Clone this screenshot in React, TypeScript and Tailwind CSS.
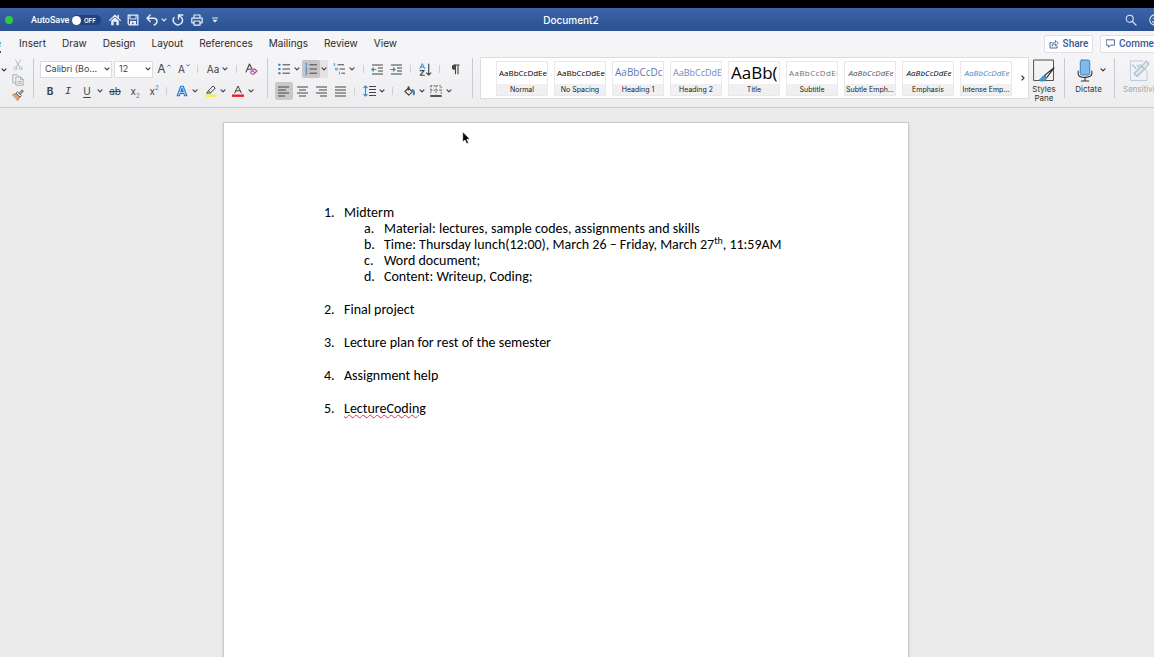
import type { ReactNode } from "react";

const Svg = ({ w, h, children, className = "" }: { w: number; h: number; children: ReactNode; className?: string }) => (
  <svg
    width={w}
    height={h}
    viewBox={`0 0 ${w} ${h}`}
    fill="none"
    stroke="currentColor"
    strokeLinecap="round"
    strokeLinejoin="round"
    className={`shrink-0 ${className}`}
    aria-hidden="true"
  >
    {children}
  </svg>
);

const Caret = () => (
  <Svg w={6} h={4}>
    <path d="M1 0.9 L3 2.9 L5 0.9" strokeWidth="1.2" />
  </Svg>
);

const Tool = ({ label, className, children }: { label: string; className: string; children: ReactNode }) => (
  <button type="button" aria-label={label} className={`flex h-[18px] shrink-0 items-center justify-center ${className}`}>
    {children}
  </button>
);

const Drop = ({ label }: { label: string }) => (
  <Tool label={label} className="w-2">
    <Caret />
  </Tool>
);

const Sep = ({ className = "" }: { className?: string }) => <div className={`h-2 w-px shrink-0 bg-[#cfcfd1] ${className}`} />;
const Divider = () => <div className="my-px w-px shrink-0 bg-[#cbcbcd]" />;

const Lines = ({ rows }: { rows: number[][] }) => (
  <Svg w={12} h={11}>
    {rows.map(([a, b], i) => (
      <path key={i} d={`M${a - 1} ${i * 3 + 1} H${b - 1}`} strokeWidth="1" strokeLinecap="butt" />
    ))}
  </Svg>
);

const tabs = ["Insert", "Draw", "Design", "Layout", "References", "Mailings", "Review", "View"];

const styles = [
  { name: "Normal", sample: "AaBbCcDdEe", look: "text-[8px] text-black justify-center" },
  { name: "No Spacing", sample: "AaBbCcDdEe", look: "text-[8px] text-black justify-center" },
  { name: "Heading 1", sample: "AaBbCcDc", look: "text-[10px] text-[#5f7bb0] justify-start" },
  { name: "Heading 2", sample: "AaBbCcDdEe", look: "text-[9px] text-[#7189b8] justify-start" },
  { name: "Title", sample: "AaBb(", look: "text-[17px] text-black justify-start" },
  { name: "Subtitle", sample: "AaBbCcDdEe", look: "text-[8px] tracking-wider text-[#707070] justify-start" },
  { name: "Subtle Emph...", sample: "AaBbCcDdEe", look: "text-[8px] italic text-[#505050] justify-center" },
  { name: "Emphasis", sample: "AaBbCcDdEe", look: "text-[8px] italic text-black justify-center" },
  { name: "Intense Emp...", sample: "AaBbCcDdEe", look: "text-[8px] italic text-[#4f7fcb] justify-center" },
];

function TitleBar() {
  return (
    <header className="relative flex h-[23px] items-center bg-linear-to-b from-[#3b65a8] to-[#2a5090] pt-px text-white">
      <span className="ml-[5px] size-2 rounded-full bg-[#2fca44]" />
      <label htmlFor="autosave" className="ml-[18px] w-[38px] pt-px font-[Roboto,sans-serif] text-[9px] font-medium">AutoSave</label>
      <span className="relative ml-[3px] flex h-[10px] w-[29px] items-center rounded-full bg-[#23417a]">
        <input id="autosave" type="checkbox" className="peer absolute inset-0 appearance-none" />
        <span className="size-[9px] rounded-full bg-white" />
        <span className="ml-[3px] text-[6px] font-semibold">OFF</span>
      </span>
      <div className="ml-2 flex items-center text-[#e6edf8]">
        <Tool label="Home" className="w-3">
          <Svg w={12} h={12}>
            <path d="M0.7 6.4 L6 1.3 L11.3 6.4 M9.3 1.2 V4" strokeWidth="1.3" />
            <path d="M2.2 6.8 L6 3.2 L9.8 6.8 V11.3 H7.4 V7.8 H4.6 V11.3 H2.2 Z" fill="currentColor" stroke="none" />
          </Svg>
        </Tool>
        <Tool label="Save" className="ml-[6px] w-3">
          <Svg w={12} h={12}>
            <path d="M1.2 1.2 H10.8 V10.8 H2.2 L1.2 9.8 Z" strokeWidth="1.3" />
            <path d="M3 1.5 V5 H9 V1.5" strokeWidth="1" />
            <path d="M3 11 V7 H9 V11 H6.5 V8.5 H5 V11 Z" fill="currentColor" stroke="none" />
          </Svg>
        </Tool>
        <Tool label="Undo" className="ml-[7px] w-3">
          <Svg w={12} h={12}>
            <path d="M4.2 1 L1 4.2 L4.2 7.4 M1.2 4.2 H7.5 C12 4.2 12.2 9 8.2 11" strokeWidth="1.4" />
          </Svg>
        </Tool>
        <span className="ml-[2px] flex"><Drop label="Undo history" /></span>
        <Tool label="Redo" className="ml-1 w-3">
          <Svg w={12} h={12}>
            <path d="M2 3.6 A4.6 4.6 0 1 0 9.8 3.8 L6.6 1.2 M6.5 5 V1 H10.8" strokeWidth="1.4" />
          </Svg>
        </Tool>
        <Tool label="Print" className="ml-[7px] w-3">
          <Svg w={12} h={12}>
            <path d="M3 4 V1 H9 V4 M3 8.8 H0.8 V4.2 H11.2 V8.8 H9" strokeWidth="1.2" />
            <path d="M3 7 H9 V11.2 H3 Z" strokeWidth="1.2" />
          </Svg>
        </Tool>
        <Tool label="Customize toolbar" className="ml-[8px] w-2">
          <Svg w={6} h={6}>
            <path d="M0.5 1 H5.5" strokeWidth="1" />
            <path d="M0.3 2.8 H5.7 L3 5.6 Z" fill="currentColor" stroke="none" />
          </Svg>
        </Tool>
      </div>
      <h1 className="pointer-events-none absolute inset-x-0 pr-3 pt-px text-center text-[10px] font-medium">Document2</h1>
      <div className="-mr-[7px] ml-auto flex items-center gap-3 text-[#dde7f6]">
        <Tool label="Search" className="w-3">
          <Svg w={12} h={12}>
            <circle cx="4.7" cy="4.7" r="3.5" strokeWidth="1.1" />
            <path d="M7.3 7.3 L11 11" strokeWidth="1.2" />
          </Svg>
        </Tool>
        <Tool label="Feedback" className="w-3">
          <Svg w={12} h={12}>
            <circle cx="6" cy="6" r="5.2" strokeWidth="1.1" />
            <path d="M3.5 7.2 C4.5 9.4 7.5 9.4 8.5 7.2 M4.2 4.2 V4.6 M7.8 4.2 V4.6" strokeWidth="1.1" />
          </Svg>
        </Tool>
      </div>
    </header>
  );
}

function TabRow() {
  return (
    <nav className="flex h-[25px] items-center bg-[#f5f4f6] text-[10px] text-[#2b2b2b]">
      <div className="-ml-[27px] flex shrink-0 gap-4">
        <button type="button" className="mr-[2px] border-b-2 border-[#2a5699] pt-px text-[#2a5699]">Home</button>
        {tabs.map((t) => (
          <button key={t} type="button" className="border-b-2 border-transparent pt-px">{t}</button>
        ))}
      </div>
      <div className="-mr-4 ml-auto flex shrink-0 gap-[7px] text-[10px] font-medium text-[#3b5998]">
        <button type="button" className="flex h-[18px] w-[49px] items-center justify-center gap-1 rounded-xs border border-[#e0e0e2] bg-white font-[Roboto,sans-serif]">
          <Svg w={10} h={10}>
            <path d="M3 3.7 H1 V9 H8 V7" strokeWidth="0.9" />
            <path d="M3.2 6.8 C3.2 4.5 4.5 3.4 6.5 3.4 V1.4 L9.3 4.2 L6.5 6.8 V5 C5 5 4 5.5 3.2 6.8 Z" strokeWidth="0.8" />
          </Svg>
          Share
        </button>
        <button type="button" className="flex h-[18px] w-[70px] items-center gap-1 rounded-xs border border-[#e0e0e2] bg-white pl-[5px] font-[Roboto,sans-serif]">
          <Svg w={9} h={9}>
            <path d="M0.6 0.8 H8.4 V6.2 H4.6 L2.6 8.2 V6.2 H0.6 Z" strokeWidth="0.9" />
          </Svg>
          Comments
        </button>
      </div>
    </nav>
  );
}

function Clipboard() {
  return (
    <div className="flex w-[33px] shrink-0">
      <div className="flex pt-1"><Drop label="Paste options" /></div>
      <div className="ml-1 flex flex-col items-center gap-[3px] pt-[2px]">
        <button type="button" aria-label="Cut" className="text-[#b3b3b5]">
          <Svg w={12} h={12}>
            <path d="M3.5 1 L7.7 8 M8.5 1 L4.3 8" strokeWidth="0.9" />
            <circle cx="3.3" cy="9.4" r="1.5" strokeWidth="0.9" stroke="#9fc4e0" />
            <circle cx="8.7" cy="9.4" r="1.5" strokeWidth="0.9" stroke="#9fc4e0" />
          </Svg>
        </button>
        <button type="button" aria-label="Copy" className="text-[#a9a9ab]">
          <Svg w={12} h={12}>
            <path d="M4 9 H0.8 V0.8 H5 L6.5 2.2" strokeWidth="0.9" />
            <path d="M4.2 3 H8.8 L11.2 5.3 V11.2 H4.2 Z M8.5 3.2 V5.6 H11 M6 7.5 H9.5 M6 9.3 H9.5" strokeWidth="0.9" />
          </Svg>
        </button>
        <button type="button" aria-label="Format Painter" className="text-[#444]">
          <Svg w={12} h={12}>
            <path d="M1 5.6 L4.5 4.4 L8 7.9 L5.8 11.2 Z" fill="#f0a25f" stroke="#a56a3c" strokeWidth="0.7" />
            <path d="M4.2 4 L5.5 2.8 L9.4 6.6 L8.2 8 Z" fill="#fff" strokeWidth="0.9" />
            <path d="M7.3 4.2 L10.2 1 L11.3 2 L8.4 5.2" strokeWidth="1" />
          </Svg>
        </button>
      </div>
    </div>
  );
}

function FontGroup() {
  return (
    <div className="flex w-[233px] shrink-0 flex-col gap-1 pl-[6px] pt-[3px] text-[#444]">
      <div className="flex h-[18px] items-center">
        <div className="relative mr-[2px] flex items-center">
          <select aria-label="Font" className="h-[17px] w-[72px] appearance-none border border-[#dcdcde] bg-white pl-[4px] text-[9px]">
            <option>Calibri (Bo...</option>
          </select>
          <span className="pointer-events-none absolute right-[2px]"><Caret /></span>
        </div>
        <div className="relative flex items-center">
          <select aria-label="Font size" className="h-[17px] w-[39px] appearance-none border border-[#dcdcde] bg-white pl-[4px] text-[9px]">
            <option>12</option>
          </select>
          <span className="pointer-events-none absolute right-[2px]"><Caret /></span>
        </div>
        <Tool label="Grow font" className="ml-px w-5 gap-px text-[12px]">
          A<span className="mb-[7px] flex text-[#2e8bd0]"><Svg w={4} h={3}><path d="M0.7 2.3 L2 0.9 L3.3 2.3" strokeWidth="1" /></Svg></span>
        </Tool>
        <Tool label="Shrink font" className="w-5 gap-px text-[10px]">
          A<span className="mb-2 flex text-[#2e8bd0]"><Svg w={4} h={3}><path d="M0.7 0.7 L2 2.1 L3.3 0.7" strokeWidth="1" /></Svg></span>
        </Tool>
        <Sep className="ml-[3px]" />
        <Tool label="Change case" className="ml-[7px] w-4 text-[10px]">Aa</Tool>
        <Drop label="Case options" />
        <Sep className="ml-[7px]" />
        <Tool label="Clear formatting" className="ml-[7px] w-[14px]">
          <Svg w={13} h={12}>
            <path d="M1 9 L4.5 1 L7 6 M2.3 6.2 H6" strokeWidth="1.1" />
            <path d="M5.5 9.2 L9.2 5.8 L12 8 L8.5 11.3 H7 Z M7.3 7.5 L10 9.8" strokeWidth="1.1" stroke="#b04f9c" />
          </Svg>
        </Tool>
      </div>
      <div className="flex h-[18px] items-center text-[10px]">
        <Tool label="Bold" className="w-5 font-bold">B</Tool>
        <Tool label="Italic" className="w-4 font-[Liberation_Mono,monospace] text-[11px] italic">I</Tool>
        <Tool label="Underline" className="ml-[2px] w-[18px] underline underline-offset-2">U</Tool>
        <Drop label="Underline options" />
        <Tool label="Strikethrough" className="w-[22px] line-through">ab</Tool>
        <Tool label="Subscript" className="w-[18px]">
          x<span className="mt-2 text-[6px] text-[#2e8bd0]">2</span>
        </Tool>
        <Tool label="Superscript" className="w-5">
          x<span className="mb-2 text-[6px] text-[#2e8bd0]">2</span>
        </Tool>
        <Sep className="ml-[2px]" />
        <Tool label="Text effects" className="ml-[7px] w-4">
          <Svg w={12} h={12}>
            <path d="M1.2 10.8 L4.7 1.2 H7.3 L10.8 10.8 H8.6 L7.8 8.4 H4.2 L3.4 10.8 Z M4.9 6.4 H7.1 L6 3.2 Z" strokeWidth="1.1" stroke="#2478c8" fill="#cfe5f8" />
          </Svg>
        </Tool>
        <span className="ml-px flex"><Drop label="Text effect options" /></span>
        <Tool label="Highlight" className="ml-1 w-4">
          <Svg w={12} h={12}>
            <path d="M3 6.2 L8 1 L10.3 3 L5.5 8 L2.2 8.2 Z M3.5 6 L5.5 7.8" strokeWidth="1" />
            <path d="M0.5 10.7 H11.5" strokeWidth="2.4" stroke="#f7f33a" strokeLinecap="butt" />
          </Svg>
        </Tool>
        <Drop label="Highlight colors" />
        <Tool label="Font color" className="ml-[3px] w-4">
          <Svg w={12} h={12}>
            <path d="M2.7 8 L6 1 L9.3 8 M3.8 5.8 H8.2" strokeWidth="1" />
            <path d="M0 10.7 H12" strokeWidth="2.4" stroke="#f21b2a" strokeLinecap="butt" />
          </Svg>
        </Tool>
        <span className="ml-px flex"><Drop label="Font colors" /></span>
      </div>
    </div>
  );
}

function ParagraphGroup() {
  return (
    <div className="flex w-[204px] shrink-0 flex-col gap-1 pl-[7px] pt-[3px] text-[#444]">
      <div className="flex h-[18px] items-center">
        <Tool label="Bullets" className="w-[18px]">
          <Svg w={12} h={12}>
            <path d="M4.5 1.8 H12 M4.5 6 H12 M4.5 10.2 H12" strokeWidth="1" strokeLinecap="butt" />
            <path d="M0.3 1.8 H2.5 M0.3 6 H2.5 M0.3 10.2 H2.5" stroke="#2e7fc0" strokeWidth="2" strokeLinecap="butt" />
          </Svg>
        </Tool>
        <Drop label="Bullet options" />
        <div className="ml-px flex rounded-xs bg-[#e3e3e4]">
          <Tool label="Numbering" className="w-[18px] rounded-xs bg-[#c6c6c8]">
            <Svg w={12} h={12}>
              <path d="M4.5 1.8 H12 M4.5 6 H12 M4.5 10.2 H12" strokeWidth="1" strokeLinecap="butt" />
              <path d="M0.8 0.6 L1.6 0.3 V3 M0.6 4.8 H2 L0.7 7.2 H2.2 M0.6 8.8 H2 L1.3 10 L2.1 10.8 L0.6 11.5" stroke="#2e7fc0" strokeWidth="0.8" />
            </Svg>
          </Tool>
          <Drop label="Numbering options" />
        </div>
        <Tool label="Multilevel list" className="ml-[2px] w-[18px]">
          <Svg w={12} h={12}>
            <path d="M4.5 1.8 H11 M6.5 6 H12 M8.5 10.2 H12" strokeWidth="1" strokeLinecap="butt" />
            <path d="M0.8 0.9 L1.6 0.5 V3 M3 5.2 H4.4 V7 H3 Z M6.5 9 V11.2" stroke="#2e8bd0" strokeWidth="0.8" />
          </Svg>
        </Tool>
        <Drop label="Multilevel options" />
        <Sep className="ml-[7px]" />
        <Tool label="Decrease indent" className="ml-1 w-[18px]">
          <Svg w={12} h={11}>
            <path d="M1 1 H12 M7 4 H12 M7 7 H12 M1 10 H12" strokeWidth="1" strokeLinecap="butt" />
            <path d="M5 5.5 H0.8 M2.5 3.8 L0.8 5.5 L2.5 7.2" stroke="#2e8bd0" strokeWidth="1.1" />
          </Svg>
        </Tool>
        <Tool label="Increase indent" className="ml-px w-[18px]">
          <Svg w={12} h={11}>
            <path d="M1 1 H12 M7 4 H12 M7 7 H12 M1 10 H12" strokeWidth="1" strokeLinecap="butt" />
            <path d="M0.8 5.5 H5 M3.3 3.8 L5 5.5 L3.3 7.2" stroke="#2e8bd0" strokeWidth="1.1" />
          </Svg>
        </Tool>
        <Sep className="ml-[5px]" />
        <Tool label="Sort" className="ml-1 w-5">
          <Svg w={13} h={13}>
            <path d="M1 5.5 L3.3 0.6 L5.6 5.5 M1.9 4 H4.7" stroke="#2e8bd0" strokeWidth="1" />
            <path d="M1.2 7.6 H5.2 L1.2 12.2 H5.4 M9.7 1 V12 M7.5 9.8 L9.7 12 L11.9 9.8" strokeWidth="1.1" />
          </Svg>
        </Tool>
        <Sep className="ml-1" />
        <Tool label="Show formatting marks" className="ml-[5px] w-5">
          <Svg w={9} h={11}>
            <path d="M4.5 10.2 V1 M7 10.2 V1 M3.8 1 H8.5" strokeWidth="1.1" strokeLinecap="butt" />
            <path d="M4.5 0.6 H3.5 A2.6 2.6 0 0 0 3.5 5.8 H4.5 Z" fill="currentColor" stroke="none" />
          </Svg>
        </Tool>
      </div>
      <div className="flex h-[18px] items-center">
        <Tool label="Align left" className="w-[18px] rounded-xs bg-[#c9c9cb]"><Lines rows={[[1, 12], [1, 9], [1, 12], [1, 8]]} /></Tool>
        <Tool label="Align center" className="ml-px w-[18px]"><Lines rows={[[1, 12], [3, 10], [1, 12], [3, 10]]} /></Tool>
        <Tool label="Align right" className="ml-px w-[18px]"><Lines rows={[[1, 12], [4, 12], [1, 12], [5, 12]]} /></Tool>
        <Tool label="Justify" className="ml-px w-[18px]"><Lines rows={[[1, 12], [1, 12], [1, 12], [1, 12]]} /></Tool>
        <Sep className="ml-1" />
        <Tool label="Line spacing" className="ml-[5px] w-[18px]">
          <Svg w={13} h={12}>
            <path d="M6 1.5 H13 M6 4.5 H13 M6 7.5 H13 M6 10.5 H13" strokeWidth="1" strokeLinecap="butt" />
            <path d="M2.5 1 V11 M0.8 2.7 L2.5 1 L4.2 2.7 M0.8 9.3 L2.5 11 L4.2 9.3" stroke="#2e8bd0" strokeWidth="1.1" />
          </Svg>
        </Tool>
        <Drop label="Spacing options" />
        <Sep className="ml-[6px]" />
        <Tool label="Shading" className="ml-[7px] w-[18px]">
          <Svg w={11} h={11}>
            <path d="M4.5 2 L8.3 5.8 L4.8 9.2 L1 5.5 L5.2 1.2 M4.2 0.6 V4" strokeWidth="1.1" />
            <path d="M8.6 4 C10.4 5.5 10.5 7 9.6 8.4" strokeWidth="1.8" stroke="#3c79ac" />
          </Svg>
        </Tool>
        <Drop label="Shading colors" />
        <Tool label="Borders" className="ml-px w-[18px]">
          <Svg w={12} h={12}>
            <path d="M0.8 0.8 H11.2 V9.5 M0.8 0.8 V9.5 M6 0.8 V9.5 M0.8 5.2 H11.2" strokeWidth="0.9" strokeDasharray="1.5 1.3" strokeLinecap="butt" />
            <path d="M0.3 11 H11.7" strokeWidth="1.5" stroke="#222" strokeLinecap="butt" />
          </Svg>
        </Tool>
        <Drop label="Border options" />
      </div>
    </div>
  );
}

function Gallery() {
  return (
    <div className="ml-[7px] flex w-[549px] shrink-0 items-center border border-[#dcdcde] bg-white pl-[15px]">
      <div className="flex gap-[6px]">
        {styles.map((s) => (
          <button key={s.name} type="button" className="flex h-[35px] w-[52px] flex-col overflow-hidden border border-[#e9e9eb] bg-white">
            <span className={`ml-[2px] flex h-[22px] w-[48px] items-center overflow-hidden whitespace-nowrap font-[Open_Sans,sans-serif] ${s.look}`}>{s.sample}</span>
            <span className="h-[11px] w-full whitespace-nowrap bg-[#f0f0f2] text-center text-[7px] leading-[11px] text-[#222]">{s.name}</span>
          </button>
        ))}
      </div>
      <button type="button" aria-label="More styles" className="ml-[6px] flex w-3 justify-center text-[#333]">
        <Svg w={4} h={6}><path d="M1 1 L3 3 L1 5" strokeWidth="1.1" /></Svg>
      </button>
    </div>
  );
}

function Ribbon() {
  return (
    <div className="flex h-[52px] overflow-hidden border-b border-[#cdcdcf] bg-linear-to-b from-[#f5f4f6] to-[#ededef] pb-2 pt-px text-[#333]">
      <Clipboard />
      <Divider />
      <FontGroup />
      <Divider />
      <ParagraphGroup />
      <Divider />
      <Gallery />
      <button type="button" className="ml-px flex w-[28px] shrink-0 flex-col items-center pt-[2px] text-[8px] leading-[9px]">
        <Svg w={22} h={24}>
          <path d="M1 1 H20.5 V21.5 H1 Z" strokeWidth="1" stroke="#555" />
          <path d="M21 8.8 L11.5 16.5 L13.5 18.8 Z" fill="#fff" strokeWidth="1.1" />
          <path d="M11.5 16.7 C9 16.5 9 19.5 6 21 C9.5 23.2 13.6 22 13.3 18.8 Z" fill="#4a9ad6" stroke="#3c84ba" strokeWidth="0.8" />
        </Svg>
        <span className="mt-[2px]">Styles Pane</span>
      </button>
      <div className="ml-[6px] flex"><Divider /></div>
      <div className="flex w-[49px] shrink-0 pl-[10px]">
        <button type="button" className="flex w-[27px] flex-col items-center pt-[2px] text-[8px] leading-[9px]">
          <span className="pr-2">
            <Svg w={16} h={24}>
              <rect x="3.3" y="1" width="9.4" height="15" rx="1.5" fill="#7fbbe8" stroke="#3d83bd" strokeWidth="1" />
              <path d="M1.2 12 V15 C1.2 19.5 14.8 19.5 14.8 15 V12 M8 18.5 V22 M4.3 22 H11.7" strokeWidth="1.1" />
            </Svg>
          </span>
          <span className="mt-[2px]">Dictate</span>
        </button>
        <span className="-ml-[3px] flex h-[26px] items-center"><Drop label="Dictate options" /></span>
      </div>
      <Divider />
      <button type="button" disabled className="ml-2 flex shrink-0 flex-col items-start pt-[2px] text-[8px] leading-[9px] text-[#a5a5a7]">
        <span className="pl-[5px]">
          <Svg w={22} h={24}>
            <path d="M15 2 H2.5 V21.5 H19 V12" strokeWidth="1" stroke="#b9cfe0" />
            <path d="M6 14.5 L13.5 7 L16.5 10 L9 17.5 Z M12 5.5 L17.5 11 M14 7 L18 2 L21 5 L17 9.5 M4.5 6 L8 9.5 M9 6 L11 8" strokeWidth="1.1" stroke="#aebdc9" fill="#dde7ee" />
          </Svg>
        </span>
        <span className="mt-[2px]">Sensitivity</span>
      </button>
    </div>
  );
}

function Document() {
  return (
    <main className="relative flex grow justify-center bg-[#ebebeb] pr-[22px] pt-[14px]">
      <article className="w-[686px] border border-b-0 border-[#c9c9c9] bg-white pl-[100px] pt-[82px] font-[Calibri,Carlito,Lato,sans-serif] text-[14px] leading-4 text-black shadow-sm">
        <ol className="flex flex-col gap-[17px]">
          <li className="flex">
            <span className="w-5">1.</span>
            <div>
              <p>Midterm</p>
              <ol className="pl-5">
                <li className="flex"><span className="w-5">a.</span>Material: lectures, sample codes, assignments and skills</li>
                <li className="flex">
                  <span className="w-5">b.</span>
                  <span>Time: Thursday lunch(12:00), March 26 – Friday, March 27<sup className="text-[10px] leading-none">th</sup>, 11:59AM</span>
                </li>
                <li className="flex"><span className="w-5">c.</span>Word document;</li>
                <li className="flex"><span className="w-5">d.</span>Content: Writeup, Coding;</li>
              </ol>
            </div>
          </li>
          <li className="flex"><span className="w-5">2.</span>Final project</li>
          <li className="flex"><span className="w-5">3.</span>Lecture plan for rest of the semester</li>
          <li className="flex"><span className="w-5">4.</span>Assignment help</li>
          <li className="flex">
            <span className="w-5">5.</span>
            <span className="underline decoration-[#e0354a] decoration-wavy decoration-1 underline-offset-1">LectureCoding</span>
          </li>
        </ol>
      </article>
      <svg width="9" height="14" viewBox="0 0 9 14" className="absolute left-[462px] top-[23px]" aria-hidden="true">
        <path d="M0.7 0.8 V11 L3 9 L4.7 12.8 L6.5 12 L4.9 8.3 H8 Z" fill="#000" stroke="#fff" strokeWidth="0.7" />
      </svg>
    </main>
  );
}

export default function App() {
  return (
    <div className="flex min-h-screen flex-col overflow-hidden bg-[#ebebeb] font-[Inter,sans-serif]">
      <div className="h-2 bg-black" />
      <TitleBar />
      <TabRow />
      <Ribbon />
      <Document />
    </div>
  );
}
